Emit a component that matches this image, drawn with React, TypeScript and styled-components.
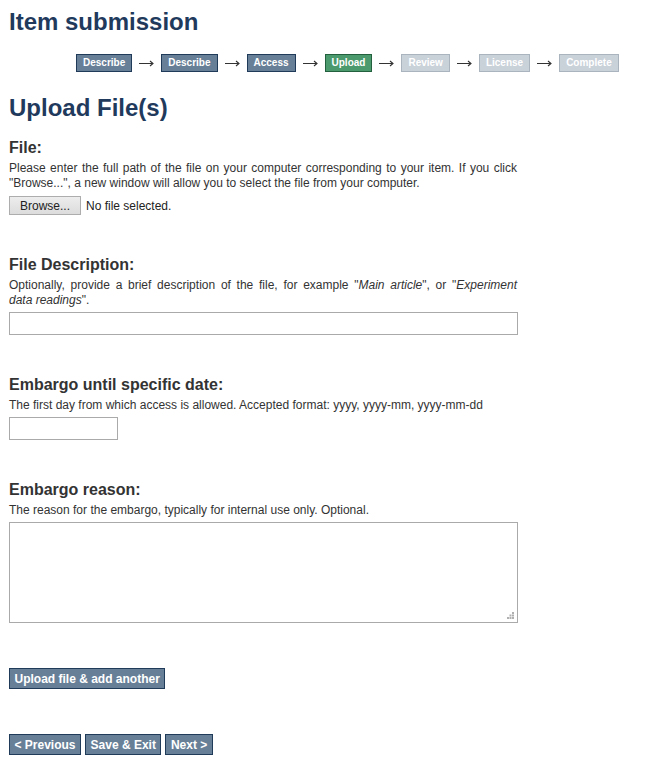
import React from "react"
import styled, { createGlobalStyle, css } from "styled-components"

const GlobalStyle = createGlobalStyle`
  body {
    margin: 0;
    background: #ffffff;
    font-family: "Liberation Sans", Arial, sans-serif;
    color: #333333;
  }
`

const Page = styled.div`
  padding: 8px 0 20px 9px;
  width: 508px;
`

const PageTitle = styled.h1`
  margin: 0;
  font-size: 24px;
  line-height: 28px;
  font-weight: bold;
  color: #1f3a5c;
`

const SectionTitle = styled(PageTitle)`
  margin-top: 22px;
`

const Progress = styled.ol`
  list-style: none;
  display: flex;
  align-items: center;
  margin: 18px 0 0 67px;
  padding: 0;
  width: 560px;
`

const Arrow = styled.li`
  display: flex;
  justify-content: center;
  align-items: center;
  width: 29px;
  height: 18px;
`

type StepState = "done" | "current" | "todo"

const Step = styled.li<{ $state: StepState }>`
  box-sizing: border-box;
  height: 18px;
  padding: 0 6px;
  border: 1px solid #1f3b59;
  background: #687f98;
  color: #ffffff;
  font-size: 10px;
  font-weight: bold;
  line-height: 16px;
  white-space: nowrap;

  ${(p) =>
    p.$state === "current" &&
    css`
      background: #4a9a6d;
      border-color: #22603e;
    `}

  ${(p) =>
    p.$state === "todo" &&
    css`
      background: #c9d1d9;
      border-color: #a9b4bf;
    `}
`

const Field = styled.div<{ $first?: boolean }>`
  margin-top: ${(p) => (p.$first ? "16px" : "40px")};
`

const Label = styled.h3`
  margin: 0;
  font-size: 16px;
  line-height: 20px;
  font-weight: bold;
  color: #333333;
`

const Help = styled.p`
  margin: 3px 0 0;
  font-size: 12px;
  line-height: 15px;
  color: #333333;
  text-align: justify;

  em {
    font-style: italic;
  }
`

const NoBreak = styled.span`
  white-space: nowrap;
`

const FileRow = styled.div`
  display: flex;
  align-items: center;
  gap: 5px;
  margin-top: 5px;
`

const BrowseButton = styled.button`
  box-sizing: border-box;
  height: 19px;
  width: 72px;
  padding: 0;
  border: 1px solid #adadad;
  background: linear-gradient(#ededed, #dcdcdc);
  font-family: "Liberation Sans", Arial, sans-serif;
  font-size: 12px;
  color: #222222;
`

const FileName = styled.span`
  font-size: 12px;
  color: #222222;
`

const TextInput = styled.input<{ $width: number }>`
  display: block;
  box-sizing: border-box;
  width: ${(p) => p.$width}px;
  height: 23px;
  margin-top: 4px;
  border: 1px solid #aaaaaa;
  padding: 2px 4px;
  font-family: "Liberation Sans", Arial, sans-serif;
  font-size: 12px;
`

const AreaWrap = styled.div`
  position: relative;
  margin-top: 4px;
  width: 509px;
`

const TextArea = styled.textarea`
  display: block;
  box-sizing: border-box;
  width: 509px;
  height: 101px;
  border: 1px solid #aaaaaa;
  resize: none;
  font-family: "Liberation Sans", Arial, sans-serif;
  font-size: 12px;
`

const Grip = styled.svg`
  position: absolute;
  right: 4px;
  bottom: 4px;
`

const ActionButton = styled.button`
  box-sizing: border-box;
  height: 21px;
  padding: 0 4.5px;
  border: 1px solid #1f3b59;
  background: #687f98;
  color: #ffffff;
  font-family: "Liberation Sans", Arial, sans-serif;
  font-size: 12px;
  font-weight: bold;
  white-space: nowrap;
`

const AddAnother = styled.div`
  margin-top: 45px;
`

const Nav = styled.div`
  display: flex;
  gap: 4px;
  margin-top: 45px;
`

const steps: { label: string; state: StepState }[] = [
  { label: "Describe", state: "done" },
  { label: "Describe", state: "done" },
  { label: "Access", state: "done" },
  { label: "Upload", state: "current" },
  { label: "Review", state: "todo" },
  { label: "License", state: "todo" },
  { label: "Complete", state: "todo" },
]

function StepArrow() {
  return (
    <svg width="15" height="7" viewBox="0 0 15 7">
      <path d="M0 3.5H14M11 1l3 2.5L11 6" fill="none" stroke="#333" strokeWidth="1.1" />
    </svg>
  )
}

export default function App() {
  return (
    <>
      <GlobalStyle />
      <Page>
        <PageTitle>Item submission</PageTitle>
        <Progress>
          {steps.map((s, i) => (
            <React.Fragment key={i}>
              {i > 0 && (
                <Arrow>
                  <StepArrow />
                </Arrow>
              )}
              <Step $state={s.state}>{s.label}</Step>
            </React.Fragment>
          ))}
        </Progress>

        <SectionTitle>Upload File(s)</SectionTitle>

        <Field $first>
          <Label>File:</Label>
          <Help>
            Please enter the full path of the file on your computer corresponding to your item. If
            you click "Browse...", a new window will allow you to select the file from your
            computer.
          </Help>
          <FileRow>
            <BrowseButton>Browse...</BrowseButton>
            <FileName>No file selected.</FileName>
          </FileRow>
        </Field>

        <Field>
          <Label>File Description:</Label>
          <Help>
            Optionally, provide a brief description of the file, for example "<em>Main article</em>",
            or "<em>Experiment <NoBreak>data readings</NoBreak></em>".
          </Help>
          <TextInput $width={509} />
        </Field>

        <Field>
          <Label>Embargo until specific date:</Label>
          <Help>
            The first day from which access is allowed. Accepted format: yyyy, yyyy-mm, yyyy-mm-dd
          </Help>
          <TextInput $width={109} />
        </Field>

        <Field>
          <Label>Embargo reason:</Label>
          <Help>The reason for the embargo, typically for internal use only. Optional.</Help>
          <AreaWrap>
            <TextArea />
            <Grip width="7" height="7" viewBox="0 0 7 7">
              <g fill="#b0b0b0">
                <rect x="5" y="0" width="2" height="2" />
                <rect x="5" y="2.5" width="2" height="2" />
                <rect x="2.5" y="2.5" width="2" height="2" />
                <rect x="5" y="5" width="2" height="2" />
                <rect x="2.5" y="5" width="2" height="2" />
                <rect x="0" y="5" width="2" height="2" />
              </g>
            </Grip>
          </AreaWrap>
        </Field>

        <AddAnother>
          <ActionButton>Upload file &amp; add another</ActionButton>
        </AddAnother>

        <Nav>
          <ActionButton>&lt; Previous</ActionButton>
          <ActionButton>Save &amp; Exit</ActionButton>
          <ActionButton>Next &gt;</ActionButton>
        </Nav>
      </Page>
    </>
  )
}
